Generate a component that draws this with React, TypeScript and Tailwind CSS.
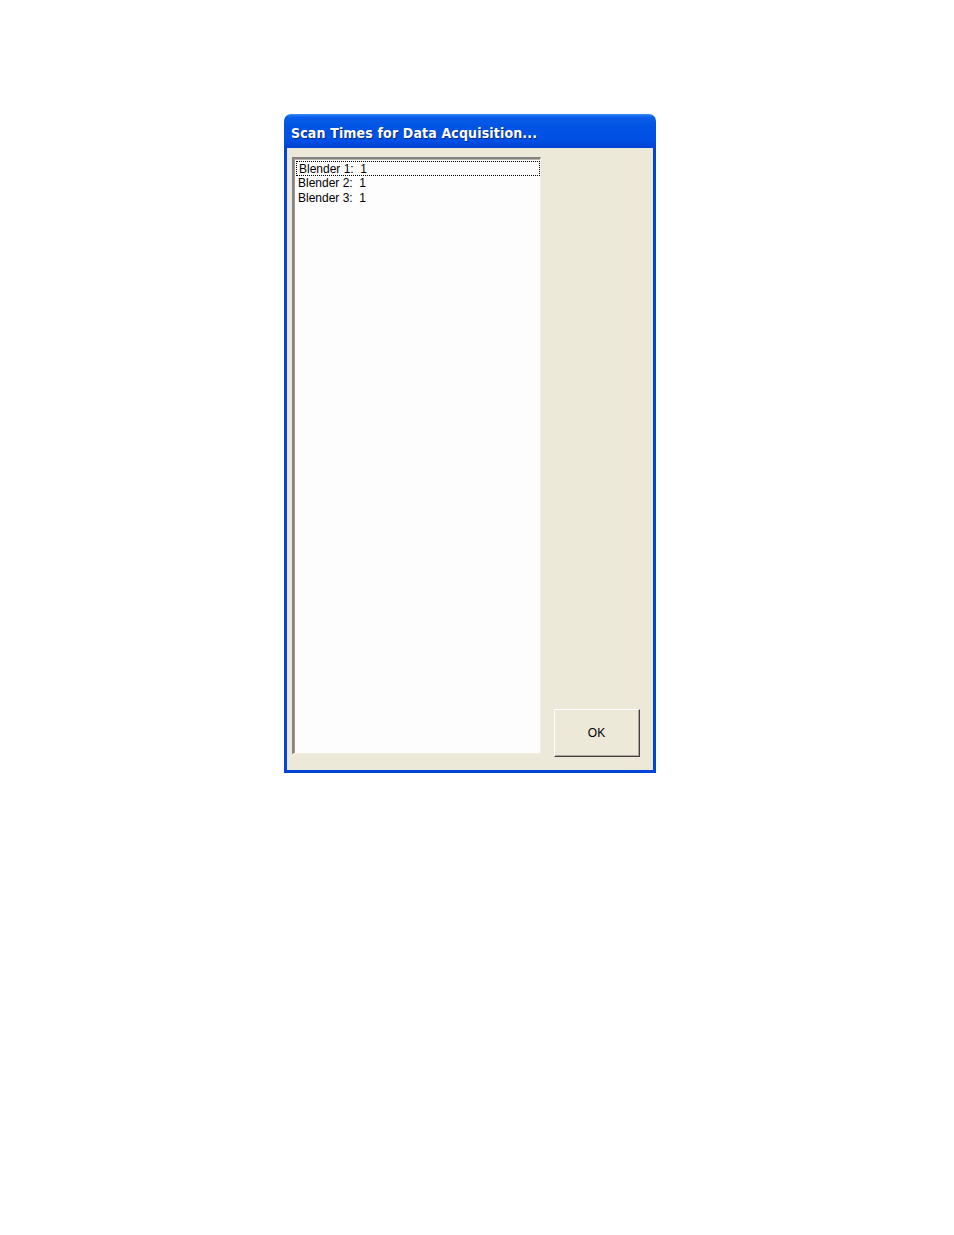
export default function App() {
  const items = ["Blender 1:  1", "Blender 2:  1", "Blender 3:  1"];

  return (
    <div className="min-h-[1235px] w-full bg-white pt-[114px] pl-[284px]">
      <div className="w-[372px]">
        {/* title bar */}
        <div className="h-[34px] rounded-t-[7px] bg-[linear-gradient(to_bottom,#3b8cf5_0px,#0a5ee8_3px,#0054e3_12px,#0050e6_26px,#0343d2_34px)] pl-[7px] pt-[6px]">
          <span
            className="text-[14px] font-bold leading-[16px] tracking-[0.15px] text-white [text-shadow:1px_1px_0_#0b2a7a]"
            style={{ fontFamily: '"DejaVu Sans Condensed", "DejaVu Sans", sans-serif' }}
          >
            Scan Times for Data Acquisition...
          </span>
        </div>

        {/* body */}
        <div className="border-x-[3px] border-b-[3px] border-[#0345d6]">
          <div className="flex h-[622px] items-end bg-[#ece9d8] pt-[9px] pb-[13px] pl-[5px]">
            {/* listbox */}
            <div className="mb-[3px] h-[597px] w-[249px] self-start border-t-[2px] border-l-[2px] border-b border-r border-t-[#848284] border-l-[#848284] border-b-[#f1efe2] border-r-[#f1efe2] bg-[#fdfdfd]">
              <div className="h-full border-t border-l border-t-[#b5b3a9] border-l-[#9d9a8f] bg-[#fdfdfd] pt-[1px] pl-[1px]">
                {items.map((t, i) => (
                  <div
                    key={t}
                    className={`h-[15px] whitespace-pre pl-[2px] text-[12px] leading-[15px] text-black ${
                      i === 0 ? "border border-dotted border-black pl-[1px] leading-[13px]" : ""
                    }`}
                    style={{ fontFamily: '"Liberation Sans", Arial, sans-serif' }}
                  >
                    {t}
                  </div>
                ))}
              </div>
            </div>

            {/* OK button */}
            <button
              type="button"
              className="ml-[13px] h-[48px] w-[86px] border border-t-white border-l-white border-b-[#404040] border-r-[#404040] bg-[#ece9d8] text-[12px] text-black"
              style={{ fontFamily: '"Liberation Sans", Arial, sans-serif' }}
            >
              <span className="flex h-full w-full items-center justify-center border-b border-r border-b-[#aca899] border-r-[#aca899]">
                OK
              </span>
            </button>
          </div>
        </div>
      </div>
    </div>
  );
}
